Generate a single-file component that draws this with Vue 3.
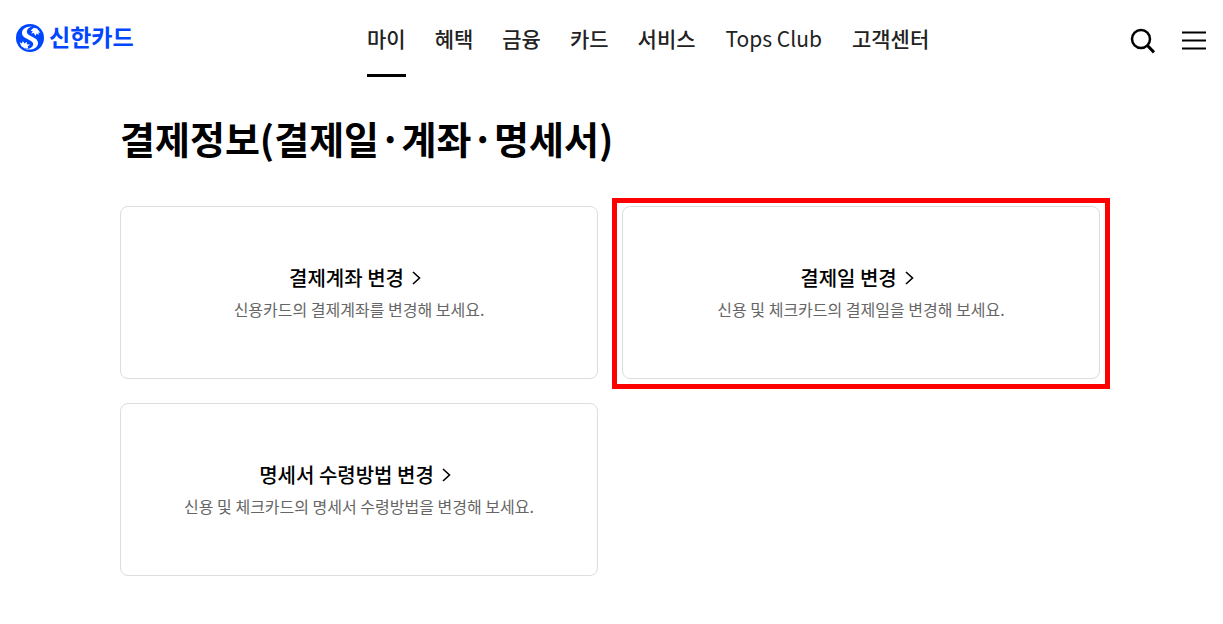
<template>
  <div class="page">
    <header class="header">
      <a href="#" class="logo">
        <svg class="logo-symbol" viewBox="0 0 28 28" aria-hidden="true">
          <circle cx="14" cy="14" r="14" fill="#0046ff" />
          <path
            d="M16 2.6C10 2.2 5.6 5.4 6 9.6C6.4 13.4 10.6 14.6 14.2 16.4C17.6 18.2 18 20.6 16 22.8C14.4 24.6 11.8 25.4 9 25C15 26.8 21.6 24.4 22 19.4C22.3 15.6 18.6 13.8 14.8 12C11.4 10.4 10 8.4 11.4 5.8C12.3 4.2 14 3.1 16 2.6Z"
            fill="#fff"
          />
          <path d="M14.6 6.4L17.8 3.8L21 4.6L24.4 8.8L22.4 8.6L22.8 11L20.6 9.6L19.4 12L17.8 9L15 9.6L16.8 7.4Z" fill="#fff" />
          <path d="M3.6 18.2L6 19.4L6.8 17L8.6 19.4L11 17.8L10.8 20.2L14 20.4L11.6 22.4L12.4 24.4L8.8 24.6L5.4 22.2Z" fill="#fff" />
        </svg>
        <span>신한카드</span>
      </a>

      <nav class="gnb">
        <a
          v-for="menu in menus"
          :key="menu.name"
          href="#"
          :class="{ active: menu.name === current, latin: menu.latin }"
        >{{ menu.name }}</a>
      </nav>

      <div class="utils">
        <button type="button" aria-label="검색">
          <svg width="26" height="26" viewBox="0 0 26 26">
            <circle cx="11" cy="11" r="9" />
            <path d="M17.2 17.2L24 24.4" class="handle" />
          </svg>
        </button>
        <button type="button" aria-label="전체메뉴">
          <svg width="24" height="26" viewBox="0 0 24 26">
            <path d="M0 4.5H24M0 12.5H24M0 20.5H24" class="bars" />
          </svg>
        </button>
      </div>
    </header>

    <main class="content">
      <h1>결제정보(결제일·계좌·명세서)</h1>
      <ul class="cards">
        <li v-for="card in cards" :key="card.title" :class="{ marked: card.marked }">
          <a href="#" class="card">
            <strong>
              {{ card.title }}
              <svg width="9" height="14" viewBox="0 0 9 14" aria-hidden="true">
                <path d="M1 1L7.5 7L1 13" />
              </svg>
            </strong>
            <p>{{ card.desc }}</p>
          </a>
        </li>
      </ul>
    </main>
  </div>
</template>

<script setup>
const menus = [
  { name: '마이' },
  { name: '혜택' },
  { name: '금융' },
  { name: '카드' },
  { name: '서비스' },
  { name: 'Tops Club', latin: true },
  { name: '고객센터' }
];
const current = '마이';

const cards = [
  { title: '결제계좌 변경', desc: '신용카드의 결제계좌를 변경해 보세요.' },
  { title: '결제일 변경', desc: '신용 및 체크카드의 결제일을 변경해 보세요.', marked: true },
  { title: '명세서 수령방법 변경', desc: '신용 및 체크카드의 명세서 수령방법을 변경해 보세요.' }
];
</script>

<style>
body {
  margin: 0;
  background: #fff;
}
</style>

<style scoped>
.page {
  font-family: "Noto Sans CJK KR", sans-serif;
  color: #000;
}
a {
  color: inherit;
  text-decoration: none;
}
.header {
  display: grid;
  grid-template-columns: 351px 1fr auto;
  height: 77px;
  padding: 0 17px 0 16px;
}
.logo {
  display: flex;
  align-items: center;
  gap: 5px;
  height: 75px;
  color: #0046ff;
  font-size: 23px;
  font-weight: 700;
  line-height: 28px;
}
.logo span {
  padding-bottom: 4px;
}
.logo-symbol {
  width: 28px;
  height: 28px;
}
.gnb {
  display: flex;
  gap: 29px;
}
.gnb a {
  box-sizing: border-box;
  height: 77px;
  border-bottom: 3px solid transparent;
  color: #222;
  font-size: 21px;
  font-weight: 500;
  line-height: 76px;
  white-space: nowrap;
}
.gnb a.latin {
  padding: 0 1px;
  font-weight: 400;
}
.gnb a.active {
  border-bottom-color: #000;
}
.utils {
  display: flex;
  align-items: center;
  gap: 26px;
  height: 82px;
}
.utils button {
  display: flex;
  padding: 0;
  border: 0;
  background: none;
  cursor: pointer;
}
.utils svg {
  fill: none;
  stroke: #000;
  stroke-width: 2.5;
}
.utils .handle {
  stroke-width: 3;
}
.utils .bars {
  stroke-width: 2;
}
.content {
  padding: 33px 123px 48px 120px;
}
h1 {
  margin: 0 0 40px;
  font-size: 38px;
  font-weight: 700;
  line-height: 56px;
}
.cards {
  display: grid;
  grid-template-columns: 1fr 1fr;
  gap: 24px;
  margin: 0;
  padding: 0;
  list-style: none;
}
.cards li {
  position: relative;
}
.cards li.marked::after {
  content: "";
  position: absolute;
  inset: -8px -10px -10px;
  border: 5px solid #f00;
  pointer-events: none;
}
.card {
  display: flex;
  flex-direction: column;
  align-items: center;
  gap: 4px;
  padding: 55px 20px 57px;
  border: 1px solid #ddd;
  border-radius: 8px;
  text-align: center;
}
.card strong {
  display: flex;
  align-items: center;
  gap: 8px;
  padding-right: 8px;
  font-size: 20px;
  font-weight: 500;
  line-height: 31px;
}
.card svg {
  fill: none;
  stroke: #000;
  stroke-width: 1.6;
}
.card p {
  margin: 0;
  color: #666;
  font-size: 16px;
  line-height: 24px;
}
</style>
